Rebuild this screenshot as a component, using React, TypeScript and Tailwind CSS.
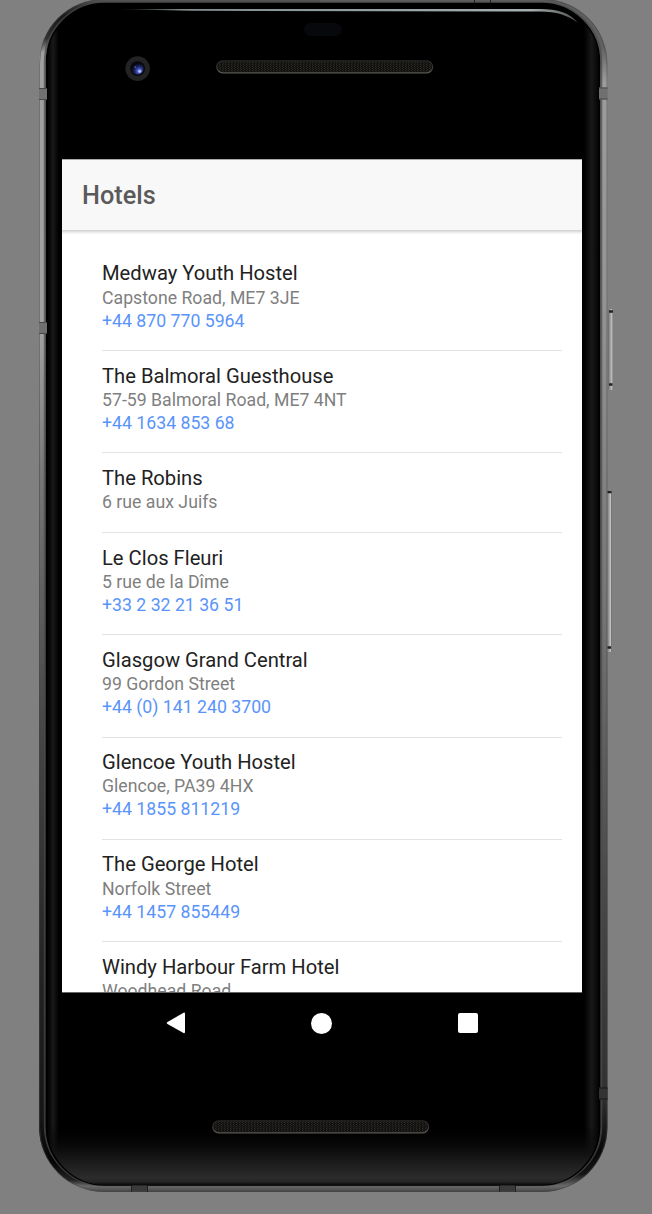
type Hotel = { name: string; address: string; phone?: string };

const hotels: Hotel[] = [
  { name: "Medway Youth Hostel", address: "Capstone Road, ME7 3JE", phone: "+44 870 770 5964" },
  { name: "The Balmoral Guesthouse", address: "57-59 Balmoral Road, ME7 4NT", phone: "+44 1634 853 68" },
  { name: "The Robins", address: "6 rue aux Juifs" },
  { name: "Le Clos Fleuri", address: "5 rue de la Dîme", phone: "+33 2 32 21 36 51" },
  { name: "Glasgow Grand Central", address: "99 Gordon Street", phone: "+44 (0) 141 240 3700" },
  { name: "Glencoe Youth Hostel", address: "Glencoe, PA39 4HX", phone: "+44 1855 811219" },
  { name: "The George Hotel", address: "Norfolk Street", phone: "+44 1457 855449" },
  { name: "Windy Harbour Farm Hotel", address: "Woodhead Road" },
];

function HotelRow({ hotel }: { hotel: Hotel }) {
  return (
    <li
      className={`border-b border-[#e2e2e2] pt-[12.7px] ${hotel.phone ? "h-[102.25px]" : "h-[79.75px]"} shrink-0`}
    >
      <h2 className="mb-[1.1px] text-[20.2px] leading-[24px] text-[#222]">{hotel.name}</h2>
      <p className="text-[17.7px] leading-[23px] text-[#7f7f7f]">{hotel.address}</p>
      {hotel.phone && (
        <a href={`tel:${hotel.phone}`} className="block text-[17.7px] leading-[22.8px] text-[#5a94fb]">
          {hotel.phone}
        </a>
      )}
    </li>
  );
}

function Speaker() {
  return (
    <svg width="218" height="14" viewBox="0 0 218 14">
      <defs>
        <pattern id="mesh" width="3" height="2" patternUnits="userSpaceOnUse">
          <rect width="3" height="2" fill="#12110f" />
          <rect width="1" height="1" fill="#2d2b27" />
          <rect x="1" y="1" width="1" height="1" fill="#23211e" />
        </pattern>
        <linearGradient id="rim" x1="0" y1="0" x2="0" y2="1">
          <stop offset="0" stopColor="#262626" />
          <stop offset="0.5" stopColor="#333" />
          <stop offset="1" stopColor="#5a5852" />
        </linearGradient>
      </defs>
      <rect x="0.7" y="0.8" width="216" height="12" rx="6" fill="url(#mesh)" stroke="url(#rim)" strokeWidth="1.2" />
    </svg>
  );
}

function Camera() {
  return (
    <svg width="26" height="26" viewBox="0 0 26 26">
      <defs>
        <radialGradient id="lens" cx="0.66" cy="0.7" r="0.65">
          <stop offset="0" stopColor="#8b9df5" />
          <stop offset="0.28" stopColor="#4456b8" />
          <stop offset="0.6" stopColor="#1b2460" />
          <stop offset="1" stopColor="#05060f" />
        </radialGradient>
      </defs>
      <circle cx="12.6" cy="12.6" r="12.3" fill="#242323" />
      <circle cx="12.6" cy="12.6" r="7.6" fill="#0c0c10" />
      <circle cx="12.4" cy="12.6" r="6" fill="url(#lens)" />
      <circle cx="10.3" cy="11" r="0.9" fill="#4058bb" />
      <circle cx="14.7" cy="15.3" r="1.5" fill="#b0c1ff" />
    </svg>
  );
}

function DeviceBody() {
  return (
    <svg className="absolute inset-0" width="652" height="1214" viewBox="0 0 652 1214">
      <defs>
        <linearGradient id="metal" x1="0" y1="0" x2="0" y2="1">
          <stop offset="0" stopColor="#5c5c5c" />
          <stop offset="0.006" stopColor="#333" />
          <stop offset="0.015" stopColor="#181818" />
          <stop offset="0.033" stopColor="#303030" />
          <stop offset="0.045" stopColor="#a0a0a0" />
          <stop offset="0.28" stopColor="#a2a2a2" />
          <stop offset="0.4" stopColor="#777" />
          <stop offset="0.6" stopColor="#484848" />
          <stop offset="0.8" stopColor="#262626" />
          <stop offset="0.94" stopColor="#151515" />
          <stop offset="0.975" stopColor="#050505" />
          <stop offset="0.99" stopColor="#222" />
          <stop offset="0.995" stopColor="#6a6a6a" />
          <stop offset="1" stopColor="#444" />
        </linearGradient>
        <linearGradient id="metalRight" x1="0" y1="0" x2="0" y2="1">
          <stop offset="0" stopColor="#5c5c5c" />
          <stop offset="0.04" stopColor="#606060" />
          <stop offset="0.07" stopColor="#9c9c9c" />
          <stop offset="0.25" stopColor="#949494" />
          <stop offset="0.5" stopColor="#777" />
          <stop offset="0.75" stopColor="#484848" />
          <stop offset="0.92" stopColor="#303030" />
          <stop offset="0.965" stopColor="#080808" />
          <stop offset="0.985" stopColor="#151515" />
          <stop offset="0.995" stopColor="#6a6a6a" />
          <stop offset="1" stopColor="#444" />
        </linearGradient>
        <linearGradient id="edge" x1="0" y1="0" x2="1" y2="0">
          <stop offset="0" stopColor="#000" />
          <stop offset="0.005" stopColor="#080808" />
          <stop offset="0.012" stopColor="#191919" />
          <stop offset="0.022" stopColor="#000" />
          <stop offset="0.972" stopColor="#000" />
          <stop offset="0.986" stopColor="#181818" />
          <stop offset="1" stopColor="#020202" />
        </linearGradient>
        <linearGradient id="chin" x1="0" y1="0" x2="0" y2="1">
          <stop offset="0" stopColor="#000" stopOpacity="0" />
          <stop offset="0.5" stopColor="#131313" />
          <stop offset="0.88" stopColor="#2c2c2c" />
          <stop offset="0.95" stopColor="#242424" />
          <stop offset="1" stopColor="#080808" />
        </linearGradient>
        <linearGradient id="gloss" x1="0" y1="0" x2="1" y2="0">
          <stop offset="0" stopColor="#728080" stopOpacity="0" />
          <stop offset="0.15" stopColor="#7f8b8b" />
          <stop offset="0.9" stopColor="#a7b0b0" />
          <stop offset="1" stopColor="#8b9191" stopOpacity="0.6" />
        </linearGradient>
        <linearGradient id="key" x1="0" y1="0" x2="1" y2="0">
          <stop offset="0" stopColor="#666" />
          <stop offset="0.4" stopColor="#999" />
          <stop offset="0.8" stopColor="#c4c4c4" />
          <stop offset="1" stopColor="#6b6b6b" />
        </linearGradient>
        <clipPath id="leftHalf"><rect width="320" height="1214" /></clipPath>
        <clipPath id="rightHalf"><rect x="320" width="332" height="1214" /></clipPath>
        <clipPath id="chinClip"><rect x="48" y="4" width="550" height="1181" rx="57" /></clipPath>
      </defs>

      <g clipPath="url(#leftHalf)">
        <rect x="39" y="-1" width="568.5" height="1193" rx="65" fill="url(#metal)" />
      </g>
      <g clipPath="url(#rightHalf)">
        <rect x="39" y="-1" width="568.5" height="1193" rx="65" fill="url(#metalRight)" />
      </g>
      <rect x="39.5" y="-0.5" width="567.5" height="1192" rx="64.5" fill="none" stroke="#444" strokeOpacity="0.5" />
      <rect x="44.8" y="2.8" width="556.5" height="1182.5" rx="59" fill="none" stroke="#4a4a4a" strokeOpacity="0.7" strokeWidth="2" />
      <rect x="46.5" y="3.5" width="553" height="1181.5" rx="58" fill="url(#edge)" stroke="#000" strokeWidth="1.5" />
      <rect x="48" y="1125" width="550" height="60" fill="url(#chin)" clipPath="url(#chinClip)" />

      <path d="M112 9H540C558 9 570 13 577.500 22.500C568 15.500 556 11.600 540 11.600L190 10.800Z" fill="url(#gloss)" />

      {[
        [39, 88, 8, 12],
        [39, 322, 8, 12],
        [599, 87.5, 8.5, 12],
        [599, 1087.5, 8.5, 12],
      ].map(([x, y, w, h]) => (
        <g key={`${x}-${y}`}>
          <rect x={x} y={y} width={w} height={h} fill={y > 1000 ? "#333" : "#707070"} />
          <path d={`M${x} ${y + 0.5}h${w}M${x} ${y + h - 0.5}h${w}`} stroke={y > 1000 ? "#171717" : "#484848"} />
        </g>
      ))}
      <path d="M132 1185.500h15v6h-15ZM500 1185.500h15v6h-15Z" fill="#3a3a3a" />
      <path d="M131.500 1186v6M147.500 1186v6M499.500 1186v6M515.500 1186v6M474.500 0v3M490.500 0v3" stroke="#222" />

      <rect x="608" y="309" width="5" height="81" rx="1.500" fill="url(#key)" />
      <path d="M609 311.500h4M609 384.500h3.500" stroke="#222" strokeWidth="2.500" />
      <rect x="607" y="490" width="4.500" height="162" rx="1.500" fill="url(#key)" />
      <path d="M607.500 492h4M607.500 647.500h3.500" stroke="#222" strokeWidth="2.500" />
    </svg>
  );
}

export default function App() {
  return (
    <div className="relative h-[1214px] w-[652px] overflow-hidden bg-[#808080] font-['Roboto',sans-serif]">
      <DeviceBody />
      <div className="relative ml-[62px] flex h-[1192px] w-[520px] flex-col">
        <div className="flex h-[159px] shrink-0 flex-col">
          <div className="mt-[23px] ml-[242px] h-[13px] w-[38px] rounded-full bg-[#07080c]" />
          <div className="mt-5 ml-[63px] flex items-start">
            <Camera />
            <div className="mt-[3.5px] ml-[64.5px]">
              <Speaker />
            </div>
          </div>
        </div>

        <main className="flex h-[834px] shrink-0 flex-col overflow-hidden border-b border-[#666] bg-white">
          <header className="z-10 flex h-[71px] shrink-0 items-center border-t border-[#aaa] bg-[#f8f8f8] pt-px pl-5 shadow-[0_1px_3px_1px_rgba(0,0,0,0.2)]">
            <h1 className="text-[25.3px] leading-8 font-medium text-[#5a5a5a]">Hotels</h1>
          </header>
          <ul className="mr-5 ml-10 flex flex-col pt-[18.8px]">
            {hotels.map((hotel) => (
              <HotelRow key={hotel.name} hotel={hotel} />
            ))}
          </ul>
        </main>

        <nav className="flex h-[60px] shrink-0 items-center justify-between pr-[104px] pl-[103.5px]">
          <button aria-label="Back">
            <svg width="20" height="22" viewBox="0 0 20 22">
              <path d="M1.500 10 17.500 0.800Q19 0 19 1.500V20Q19 21.700 17.500 20.900L1.500 12Q0 11 1.500 10Z" fill="#fff" />
            </svg>
          </button>
          <button aria-label="Home" className="size-[21px] rounded-full bg-white" />
          <button aria-label="Recent apps" className="size-5 rounded-[2px] bg-white" />
        </nav>

        <div className="mt-[67px] ml-[149.5px]">
          <Speaker />
        </div>
      </div>
    </div>
  );
}
